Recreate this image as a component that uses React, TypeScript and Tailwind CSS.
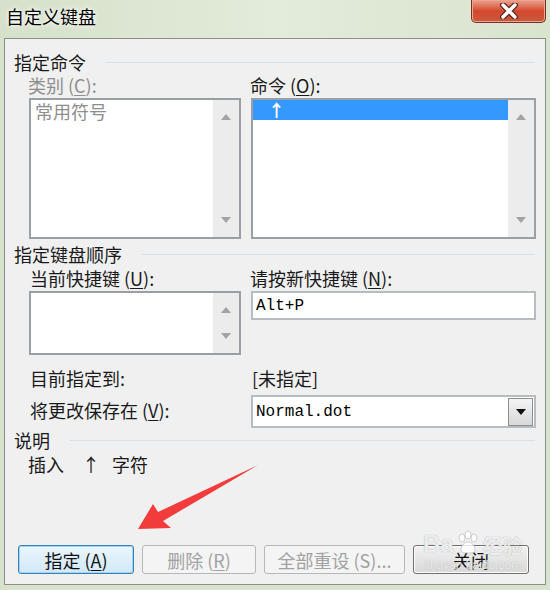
import React from "react";

const cjk = "font-['Noto_Sans_CJK_SC',sans-serif]";

function Tri({ down = false, color = "#a3a3a3" }: { down?: boolean; color?: string }) {
  return (
    <svg width="10" height="6" viewBox="0 0 10 6">
      <path d={down ? "M0 0h10L5 6z" : "M0 6h10L5 0z"} fill={color} />
    </svg>
  );
}

// fake scrollbar with only the two arrow glyphs
function ScrollStrip() {
  return (
    <div className="w-[26px] h-full bg-[#ececec] flex flex-col items-center justify-between py-[14px]">
      <Tri />
      <Tri down />
    </div>
  );
}

function Key({ k, colon = true }: { k: string; colon?: boolean }) {
  return (
    <span className="ml-[4px]">
      (<span className="underline underline-offset-2">{k}</span>){colon ? ":" : ""}
    </span>
  );
}

function SectionHead({ title }: { title: string }) {
  return (
    <div className="flex items-center h-[22px] pr-[10px]">
      <span className="text-[18px] leading-[22px] text-[#1a1a1a]">{title}</span>
      <div className="flex-1 h-px bg-[#d6e0e8] ml-[20px]" />
    </div>
  );
}

function Btn({
  label,
  w,
  kind,
}: {
  label: React.ReactNode;
  w: string;
  kind: "focus" | "off" | "normal";
}) {
  const look =
    kind === "focus"
      ? "border-[#3c7fb1] bg-gradient-to-b from-[#eaf6fd] to-[#d2e8f7] text-[#111] shadow-[inset_0_0_0_1px_#9ed4f6]"
      : kind === "off"
      ? "border-[#b4b8bc] bg-[#f4f4f4] text-[#a2a2a2]"
      : "border-[#707070] bg-gradient-to-b from-[#f2f2f2] to-[#d8d8d8] text-[#111] shadow-[inset_0_0_0_1px_#fcfcfc]";
  return (
    <div
      className={`${w} h-[29px] rounded-[3px] border flex items-center justify-center text-[18px] leading-none ${look}`}
    >
      {label}
    </div>
  );
}

export default function App() {
  return (
    <div className={`relative w-[550px] h-[590px] overflow-hidden bg-[#d8e3cd] flex flex-col ${cjk}`}>
      {/* title bar */}
      <div className="h-[38px] flex items-start bg-gradient-to-r from-[#d5e1ca] via-[#e3ebda] to-[#d9e4cf]">
        <span className="pl-[6px] pt-[4px] text-[18px] leading-[24px] text-black [text-shadow:0_0_6px_#ffffff,0_0_3px_#ffffff]">
          自定义键盘
        </span>
        <div className="ml-auto mr-[4px] w-[75px] h-[23px] rounded-b-[5px] border border-t-0 border-[#7a3226] bg-gradient-to-b from-[#e9a28f] via-[#d3472d] to-[#c95a3f] flex items-center justify-center shadow-[inset_0_0_0_1px_#eea58f]">
          <svg width="22" height="16" viewBox="0 0 22 16">
            <path d="M5 2l12 12M17 2L5 14" stroke="#5a2a20" strokeWidth="6" strokeLinecap="round" />
            <path d="M5 2l12 12M17 2L5 14" stroke="#ffffff" strokeWidth="3.4" strokeLinecap="round" />
          </svg>
        </div>
      </div>

      {/* dialog body */}
      <div className="relative mx-[4px] h-[547px] border border-[#8b8f8c] bg-[#f0f0f0] flex flex-col pl-[9px] pt-[12px] text-[#1a1a1a]">
        <SectionHead title="指定命令" />
        <div className="flex ml-[15px] mt-px">
          <div className="w-[212px] flex flex-col">
            <div className="text-[18px] leading-[22px] text-[#8e8e8e] -ml-px">
              类别<Key k="C" />
            </div>
            <div className="mt-[2px] h-[141px] border-2 border-[#9a9ea5] bg-white flex">
              <div className="flex-1 pl-[4px] text-[18px] leading-[22px] text-[#8e8e8e]">常用符号</div>
              <ScrollStrip />
            </div>
          </div>
          <div className="w-[285px] ml-[10px] flex flex-col">
            <div className="text-[18px] leading-[22px] -ml-px">
              命令<Key k="O" />
            </div>
            <div className="mt-[2px] h-[141px] border-2 border-[#9a9ea5] bg-white flex">
              <div className="flex-1">
                <div className="h-[20px] bg-[#3399ff] text-white text-[17px] leading-[20px] pl-[15px] font-bold">↑</div>
              </div>
              <ScrollStrip />
            </div>
          </div>
        </div>

        <div className="mt-[4px]">
          <SectionHead title="指定键盘顺序" />
        </div>
        <div className="flex ml-[15px] mt-[2px]">
          <div className="w-[212px] flex flex-col">
            <div className="text-[18px] leading-[22px] ml-px">
              当前快捷键<Key k="U" />
            </div>
            <div className="mt-[2px] h-[64px] border-2 border-[#9a9ea5] bg-white flex justify-end">
              <ScrollStrip />
            </div>
          </div>
          <div className="w-[285px] ml-[10px] flex flex-col">
            <div className="text-[18px] leading-[22px] -ml-px">
              请按新快捷键<Key k="N" />
            </div>
            <div className="mt-[2px] h-[29px] border-2 border-[#b7bcc3] bg-white pl-[3px] flex items-center font-['Liberation_Mono',monospace] text-[16px] text-black">
              Alt+P
            </div>
          </div>
        </div>

        <div className="flex ml-[16px] mt-[12px] h-[22px] items-center text-[18px] leading-[22px]">
          <span className="w-[222px]">目前指定到:</span>
          <span>[未指定]</span>
        </div>
        <div className="flex ml-[16px] mt-[6px] items-center text-[18px] leading-[22px]">
          <span className="w-[221px] -mt-[3px]">
            将更改保存在<Key k="V" />
          </span>
          <div className="w-[285px] h-[33px] border-2 border-[#b7bcc3] bg-white flex items-center">
            <span className="flex-1 pl-[3px] font-['Liberation_Mono',monospace] text-[16px] text-black">Normal.dot</span>
            <div className="w-[25px] h-[28px] mr-px border border-[#8d8d8d] bg-gradient-to-b from-[#f4f4f4] to-[#d9d9d9] flex items-center justify-center">
              <Tri down color="#111111" />
            </div>
          </div>
        </div>

        <div className="mt-[1px]">
          <SectionHead title="说明" />
        </div>
        <div className="ml-[14px] mt-[2px] text-[18px] leading-[22px] flex">
          <span>插入</span>
          <span className="ml-[18px]">↑</span>
          <span className="ml-[12px]">字符</span>
        </div>

        <div className="mt-auto mb-[10px] ml-[4px] flex gap-[8px]">
          <Btn
            w="w-[116px]"
            kind="focus"
            label={
              <span>
                指定<Key k="A" colon={false} />
              </span>
            }
          />
          <Btn
            w="w-[114px]"
            kind="off"
            label={
              <span>
                删除<Key k="R" colon={false} />
              </span>
            }
          />
          <Btn
            w="w-[141px]"
            kind="off"
            label={
              <span>
                全部重设<span className="ml-[4px]">(S)...</span>
              </span>
            }
          />
          <Btn w="w-[116px]" kind="normal" label="关闭" />
        </div>

        {/* annotation arrow */}
        <svg className="absolute left-0 top-0 pointer-events-none" width="542" height="547" viewBox="4 38 542 547">
          <path
            d="M137 528 L152 503 L157 511 L257 464 L162 520 L170 527 Z"
            fill="#f23b3b"
          />
        </svg>

        {/* watermark */}
        <div className="absolute left-[418px] top-[493px] flex flex-col items-center pointer-events-none text-white/80 [text-shadow:0_0_1px_#9a9a9a]">
          <div className="flex items-end h-[24px] font-['Liberation_Sans',sans-serif] text-[24px] leading-none font-bold">
            <span>Ba</span>
            <svg width="26" height="26" viewBox="0 0 26 26" className="mx-[1px]">
              <g fill="#ffffff" fillOpacity="0.8" stroke="#b0b0b0" strokeWidth="0.6">
                <ellipse cx="7" cy="8" rx="3" ry="4" />
                <ellipse cx="13" cy="5" rx="3" ry="4" />
                <ellipse cx="19" cy="8" rx="3" ry="4" />
                <path d="M6 20c0-5 4-8 7-8s7 3 7 8c0 3-3 3-7 3s-7 0-7-3z" />
              </g>
            </svg>
            <span className={`text-[20px] ml-[1px] ${cjk}`}>经验</span>
          </div>
          <div className="font-['Liberation_Sans',sans-serif] text-[12px] leading-[14px] mt-[2px]">jingyan.baidu.com</div>
        </div>
      </div>
    </div>
  );
}
